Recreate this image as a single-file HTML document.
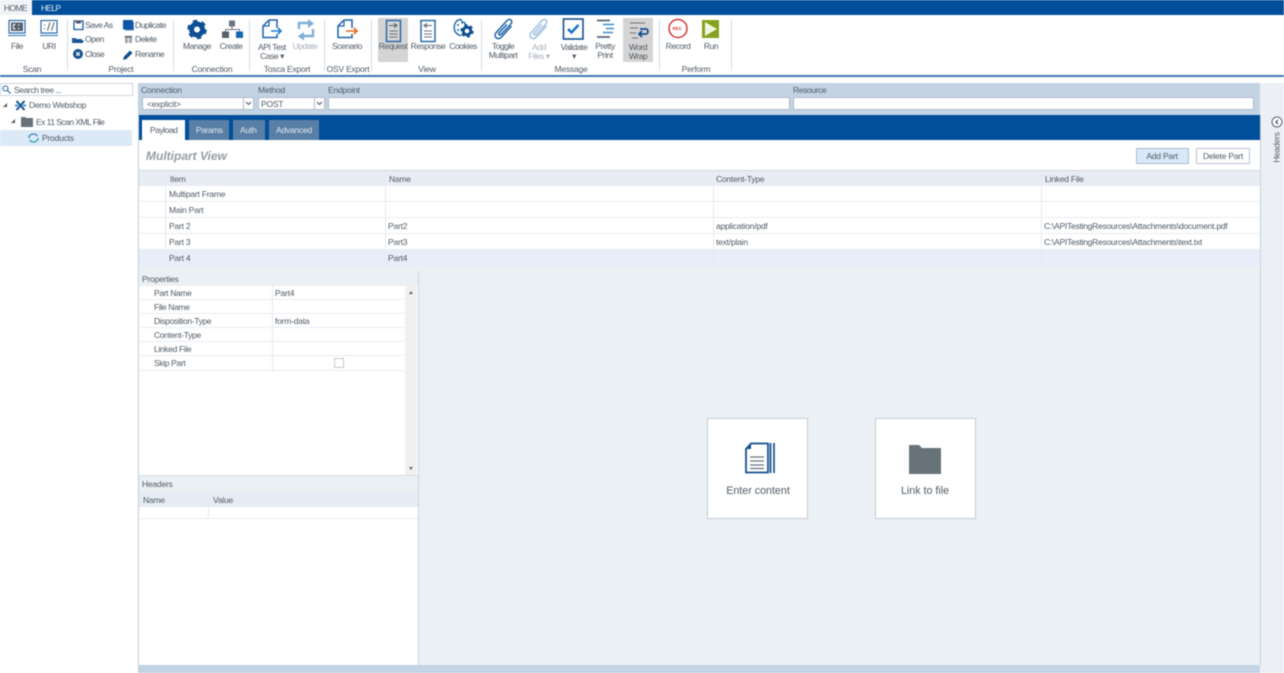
<!DOCTYPE html>
<html><head><meta charset="utf-8"><style>
html,body{margin:0;padding:0;background:#fff}
#p{position:relative;width:1284px;height:673px;overflow:hidden;background:#fff;font-family:"Liberation Sans",sans-serif;font-size:8.5px;letter-spacing:-.22px;color:#505b66;filter:blur(.45px)}
#p div,#p svg{position:absolute}
.t{white-space:nowrap;line-height:11px}
.c{transform:translateX(-50%);text-align:center;line-height:9px;letter-spacing:-.45px}
.g{transform:translateX(-50%);line-height:11px;letter-spacing:-.22px}
.a{letter-spacing:-.5px}
.i{height:13px;background:#fff;border:1px solid #aebccb;box-sizing:border-box}
.v{width:1px;background:#e6ebf0}
.h{height:1px;background:#e9edf2}
.s{width:1px;background:#d5dde6;top:20px;height:51px}
.b{letter-spacing:-.45px}
</style></head><body><div id="p">
<!-- top bar -->
<div style="left:0;top:0;width:1284px;height:15px;background:#014f9b"></div>
<div style="left:0;top:0;width:32px;height:15px;background:#f1f3f6"></div>
<div class="t" style="left:4px;top:3px;color:#55606c;letter-spacing:-.65px">HOME</div>
<div class="t" style="left:41px;top:3px;color:#e3ebf4;letter-spacing:-.7px">HELP</div>
<div style="left:0;top:75px;width:1284px;height:2px;background:#3f78b0"></div>

<!-- ribbon separators -->
<div class="s" style="left:67px"></div><div class="s" style="left:173px"></div><div class="s" style="left:249px"></div><div class="s" style="left:324px"></div><div class="s" style="left:371px"></div><div class="s" style="left:481px"></div><div class="s" style="left:659px"></div><div class="s" style="left:731px"></div>
<div style="left:378px;top:18px;width:30px;height:44px;background:#d4d4d4"></div>
<div style="left:623px;top:18px;width:30px;height:44px;background:#d4d4d4"></div>

<!-- ribbon group labels -->
<div class="t g" style="left:32px;top:64px">Scan</div>
<div class="t g" style="left:121px;top:64px">Project</div>
<div class="t g" style="left:212px;top:64px">Connection</div>
<div class="t g" style="left:287px;top:64px">Tosca Export</div>
<div class="t g" style="left:348px;top:64px">OSV Export</div>
<div class="t g" style="left:427px;top:64px">View</div>
<div class="t g" style="left:571px;top:64px">Message</div>
<div class="t g" style="left:696px;top:64px">Perform</div>

<!-- ribbon labels -->
<div class="t c" style="left:17px;top:42px">File</div>
<div class="t c" style="left:49px;top:42px">URI</div>
<div class="t a" style="left:85px;top:20px">Save As</div>
<div class="t a" style="left:85px;top:34px">Open</div>
<div class="t a" style="left:85px;top:49px">Close</div>
<div class="t a" style="left:135px;top:20px">Duplicate</div>
<div class="t a" style="left:135px;top:34px">Delete</div>
<div class="t a" style="left:135px;top:49px">Rename</div>
<div class="t c" style="left:197px;top:42px">Manage</div>
<div class="t c" style="left:231px;top:42px">Create</div>
<div class="t c" style="left:272px;top:43px">API Test<br>Case ▾</div>
<div class="t c" style="left:305px;top:42px;color:#a8b1ba">Update</div>
<div class="t c" style="left:347px;top:42px">Scenario</div>
<div class="t c" style="left:393px;top:42px">Request</div>
<div class="t c" style="left:428px;top:42px">Response</div>
<div class="t c" style="left:463px;top:42px">Cookies</div>
<div class="t c" style="left:503px;top:42px">Toggle<br>Multipart</div>
<div class="t c" style="left:539px;top:43px;color:#a8b1ba">Add<br>Files ▾</div>
<div class="t c" style="left:574px;top:43px">Validate<br>▾</div>
<div class="t c" style="left:605px;top:42px">Pretty<br>Print</div>
<div class="t c" style="left:638px;top:43px">Word<br>Wrap</div>
<div class="t c" style="left:678px;top:42px">Record</div>
<div class="t c" style="left:711px;top:42px">Run</div>

<!-- ribbon icons -->
<svg style="left:0;top:15px" width="740" height="28" viewBox="0 15 740 28" fill="none">
<!-- File -->
<rect x="9" y="20.500" width="16" height="12.500" stroke="#2a6aa8" stroke-width="1.200"/><path d="M8 35.500h18" stroke="#4d8cc4" stroke-width="1.300"/><rect x="11" y="22.500" width="12" height="8.500" fill="#55606c"/><path d="M15.500 24.500h-2v4.500h2M18 25h1.500M18 28.500h1.500" stroke="#fff" stroke-width="1"/>
<!-- URI -->
<rect x="41" y="20.500" width="16" height="12.500" stroke="#2a6aa8" stroke-width="1.200"/><path d="M40 35.500h18" stroke="#4d8cc4" stroke-width="1.300"/><path d="M44 25h1.200M44 28.500h1.200M47.500 30.500l2.500-8M51.500 30.500l2.500-8" stroke="#55606c" stroke-width="1.100"/>
<!-- Save As -->
<rect x="74" y="21" width="9" height="8.500" fill="#fff" stroke="#1d5fa3" stroke-width="1.300"/><rect x="76" y="20.500" width="5" height="3" fill="#556"/>
<!-- Open -->
<path d="M72 44v-6h3.500l1 1h5.500v1.500h-6.500l-2 3.500z" fill="#1d5fa3"/><path d="M73 44.500l2-4h9l-2 4z" fill="#14508f"/>
<!-- Duplicate -->
<rect x="125" y="22" width="9" height="8.500" fill="#4d8cc4"/><rect x="123" y="20" width="10" height="9.500" fill="#0f56a6"/>
<!-- Delete -->
<path d="M124.500 36.500h8M126 37.500v7.500h5v-7.500z" stroke="#6a7580" stroke-width="1.200"/><path d="M127.500 39v5M129.500 39v5" stroke="#6a7580" stroke-width=".7"/>
<!-- Manage gear -->
<circle cx="197" cy="29.500" r="5.500" stroke="#0e4f94" stroke-width="5"/><circle cx="197" cy="29.500" r="8.300" stroke="#0e4f94" stroke-width="3" stroke-dasharray="4.400 4.290"/>
<!-- Create -->
<rect x="229" y="20.500" width="6" height="6" fill="#6a7580"/><path d="M232 26v3.500M225.500 32v-2.500h14V32" stroke="#6a7580"/><rect x="222" y="31.500" width="7" height="6.500" fill="#55606c"/><rect x="236" y="31.500" width="7" height="6.500" fill="#1565b0"/>
<!-- API test -->
<path d="M269 20h8v8M269 20l-6 6v11.500h14v-3.500" stroke="#1c62a8" stroke-width="1.500"/><path d="M263 26h6v-6" stroke="#1c62a8" stroke-width="1.200"/><path d="M271 31h10M278 28l3 3-3 3" stroke="#1c7fd0" stroke-width="1.600"/>
<!-- Update -->
<path d="M299 29v-6h10" stroke="#7fb0d8" stroke-width="2.400"/><path d="M308 19l6 4.500-6 4.500z" fill="#7fb0d8"/><path d="M313 29v7h-10" stroke="#7fb0d8" stroke-width="2.400"/><path d="M304 32l-6 4-0 .5 6 4z" fill="#7fb0d8"/>
<!-- Scenario -->
<path d="M344 20h8v8M344 20l-6 6v11.500h14v-3.500" stroke="#1c62a8" stroke-width="1.500"/><path d="M338 26h6v-6" stroke="#1c62a8" stroke-width="1.200"/><path d="M346 31h11M354 28l3 3-3 3" stroke="#e0691a" stroke-width="1.600"/>
<!-- Request -->
<rect x="386.500" y="20.500" width="14" height="21" stroke="#2c6aa5" stroke-width="1.500"/><path d="M389 25.500h8M394 23.500l3 2-3 2" stroke="#5b6670" stroke-width="1.100"/><path d="M389.500 31h8M389.500 34h8M389.500 37h8" stroke="#6a7580" stroke-width="1.100"/>
<!-- Response -->
<rect x="421" y="20.500" width="14" height="21" stroke="#2c6aa5" stroke-width="1.500"/><path d="M424 25.500h8M427 23.500l-3 2 3 2" stroke="#5b6670" stroke-width="1.100"/><path d="M424 31h8M424 34h8M424 37h8" stroke="#6a7580" stroke-width="1.100"/>
<!-- Cookies -->
<path d="M461 19.500c-4.500 0-6.800 4-6.800 8 0 4.500 3 7.500 7 8M461 19.500c.5 2 2 3 3.500 3 .3 1.500 1.500 2.500 3 2.500" stroke="#1c62a8" stroke-width="1.400"/><circle cx="458" cy="25" r="1" fill="#1c62a8"/><circle cx="462" cy="23" r=".8" fill="#1c62a8"/><circle cx="458" cy="30" r="1" fill="#1c62a8"/><circle cx="467" cy="31" r="3.800" stroke="#0e4f94" stroke-width="3"/><circle cx="467" cy="31" r="5.800" stroke="#0e4f94" stroke-width="1.800" stroke-dasharray="2.900 3.170"/>
<!-- Toggle Multipart clip -->
<g stroke="#1c62a8" stroke-width="1.500"><path d="M511.500 26l-10 11c-1.800 2-4.200 2-5.500.6s-1.200-3.600.5-5.500l10.500-11.500c1.300-1.400 3-1.500 4-.6s1 2.700-.2 4l-9.500 10.300c-.8.9-1.700.9-2.200.4s-.5-1.300.2-2.100l7.500-8.100"/></g>
<g stroke="#9dc0de" stroke-width="1.500"><path d="M546.500 26l-10 11c-1.800 2-4.200 2-5.500.6s-1.200-3.600.5-5.500l10.500-11.500c1.300-1.400 3-1.500 4-.6s1 2.700-.2 4l-9.500 10.300c-.8.9-1.700.9-2.200.4s-.5-1.300.2-2.100l7.500-8.100"/></g>
<!-- Validate -->
<rect x="563.500" y="19" width="19.500" height="20" fill="#fff" stroke="#14508f" stroke-width="1.600"/><path d="M568 29l3.500 3.500 7-7.500" stroke="#1470c8" stroke-width="2.400"/>
<!-- Pretty print -->
<path d="M597 20.500h13" stroke="#55606c" stroke-width="1.700"/><path d="M603 24.500h11M606 28.500h8M603 32.500h10" stroke="#3d8ccc" stroke-width="1.500"/><path d="M597 37h13" stroke="#55606c" stroke-width="1.700"/>
<!-- Word wrap -->
<path d="M630 23h15M630 28h8M630 33h6M632 38h6" stroke="#6a7580" stroke-width="1.100"/><path d="M640 29h6c2.500 0 2.500 5 0 5h-7M642 31l-3 3 3 3" stroke="#14508f" stroke-width="1.800"/>
<!-- Record -->
<circle cx="678" cy="28.500" r="9" fill="#fff" stroke="#d0393b" stroke-width="1.500"/>
<!-- Run -->
<rect x="702" y="20" width="17" height="18" fill="#87a21e"/><path d="M705 22v14l12-7z" fill="#f2f5df"/>
</svg>
<div class="t" style="left:672.500px;top:24px;font-size:4.500px;letter-spacing:0;font-weight:bold;color:#d0393b;line-height:10px">REC</div>
<svg style="left:72px;top:48px" width="12" height="12" viewBox="0 0 12 12" fill="none"><circle cx="6" cy="6" r="5" fill="#14508f"/><path d="M4.200 4.200l3.600 3.600M7.800 4.200l-3.600 3.600" stroke="#fff" stroke-width="1.200"/></svg>
<svg style="left:123px;top:49px" width="11" height="11" viewBox="0 0 11 11" fill="none"><path d="M0 11l1-3.500 6-6 2.500 2.500-6 6z" fill="#14508f"/></svg>

<!-- Sidebar -->
<div class="i" style="left:0;top:83px;width:133px;border-color:#cfd6de"></div>
<svg style="left:2px;top:85px" width="9" height="9" viewBox="0 0 9 9" fill="none"><circle cx="3.500" cy="3.500" r="2.500" stroke="#2c6aa5" stroke-width="1.100"/><path d="M5.500 5.500l3 3" stroke="#2c6aa5" stroke-width="1.200"/></svg>
<div class="t" style="left:14px;top:85px;letter-spacing:-.4px">Search tree ...</div>
<div style="left:3px;top:103px;border-style:solid;border-width:0 0 4px 4px;border-color:transparent transparent #555 transparent"></div>
<svg style="left:15px;top:100px" width="11" height="11" viewBox="0 0 11 11" fill="none"><path d="M1.500 1l8 9M9.500 1l-8 9" stroke="#14508f" stroke-width="2"/><path d="M0 5.500h3M8 5.500h3" stroke="#2a86d0" stroke-width="1.800"/></svg>
<div class="t" style="left:29px;top:100px;letter-spacing:-.3px">Demo Webshop</div>
<div style="left:11px;top:119px;border-style:solid;border-width:0 0 4px 4px;border-color:transparent transparent #555 transparent"></div>
<svg style="left:21px;top:117px" width="12" height="10" viewBox="0 0 12 10"><path d="M0 0h4l1 1h7v9H0z" fill="#68727b"/></svg>
<div class="t" style="left:36px;top:117px;letter-spacing:-.53px">Ex 11 Scan XML File</div>
<div style="left:0;top:130px;width:132px;height:16px;background:#dce9f6"></div>
<svg style="left:28px;top:133px" width="11" height="10" viewBox="0 0 11 10" fill="none"><path d="M1 5c0-2.500 2-4 4.500-4 1.500 0 2.800.5 3.800 2" stroke="#3f7fba" stroke-width="1.300"/><path d="M10 5c0 2.500-2 4-4.500 4-1.500 0-2.800-.5-3.800-2" stroke="#1fa3b0" stroke-width="1.300"/></svg>
<div class="t" style="left:42px;top:133px">Products</div>

<!-- left/main divider -->
<div style="left:138px;top:83px;width:1px;height:590px;background:#c4ced9"></div>

<!-- Connection bar -->
<div style="left:139px;top:83px;width:1121px;height:32px;background:#c4d3e4"></div>
<div class="t" style="left:141px;top:85px">Connection</div>
<div class="t" style="left:258px;top:85px">Method</div>
<div class="t" style="left:328px;top:85px">Endpoint</div>
<div class="t" style="left:793px;top:85px;letter-spacing:-.4px">Resource</div>
<div class="i" style="left:142px;top:97px;width:112px"></div>
<div style="left:243px;top:98px;width:1px;height:11px;background:#aebccb"></div>
<div class="t" style="left:147px;top:99px">&lt;explicit&gt;</div>
<div class="i" style="left:258px;top:97px;width:67px"></div>
<div style="left:314px;top:98px;width:1px;height:11px;background:#aebccb"></div>
<div class="t" style="left:261px;top:99px">POST</div>
<svg style="left:245px;top:101px" width="7" height="5" viewBox="0 0 7 5" fill="none"><path d="M1 1l2.500 2.500L6 1" stroke="#556" stroke-width="1.100"/></svg>
<svg style="left:316px;top:101px" width="7" height="5" viewBox="0 0 7 5" fill="none"><path d="M1 1l2.500 2.500L6 1" stroke="#556" stroke-width="1.100"/></svg>
<div class="i" style="left:328px;top:97px;width:462px"></div>
<div class="i" style="left:793px;top:97px;width:461px"></div>

<!-- Blue band -->
<div style="left:139px;top:115px;width:1121px;height:25px;background:#014f9b"></div>
<div style="left:142px;top:120px;width:43px;height:20px;background:#fff"></div>
<div class="t b" style="left:150px;top:125px">Payload</div>
<div style="left:189px;top:120px;width:40px;height:20px;background:#5a7fa6"></div>
<div class="t b" style="left:196px;top:125px;color:#dfe7f0">Params</div>
<div style="left:233px;top:120px;width:32px;height:20px;background:#5a7fa6"></div>
<div class="t" style="left:240px;top:125px;color:#dfe7f0">Auth</div>
<div style="left:269px;top:120px;width:50px;height:20px;background:#5a7fa6"></div>
<div class="t" style="left:276px;top:125px;color:#dfe7f0">Advanced</div>

<!-- Multipart View header -->
<div class="t" style="left:146px;top:149px;font-size:12px;letter-spacing:0;font-weight:bold;font-style:italic;color:#959da5;line-height:14px">Multipart View</div>
<div style="left:1136px;top:148px;width:53px;height:16px;background:#d9e8f7;border:1px solid #a9bdd2;box-sizing:border-box"></div>
<div class="t g" style="left:1162px;top:151px">Add Part</div>
<div style="left:1196px;top:148px;width:54px;height:16px;background:#fff;border:1px solid #b8c4d1;box-sizing:border-box"></div>
<div class="t g" style="left:1223px;top:151px">Delete Part</div>

<!-- Table -->
<div style="left:139px;top:170px;width:1121px;height:16px;background:#e8edf4;border-top:1px solid #cfd7e0;box-sizing:border-box"></div>
<div style="left:139px;top:250px;width:1121px;height:16px;background:#e8edf9"></div>
<div class="h" style="left:139px;top:201px;width:1121px"></div>
<div class="h" style="left:139px;top:217px;width:1121px"></div>
<div class="h" style="left:139px;top:233px;width:1121px"></div>
<div class="h" style="left:139px;top:249px;width:1121px"></div>
<div class="v" style="left:165px;top:171px;height:95px"></div>
<div class="v" style="left:385px;top:171px;height:95px"></div>
<div class="v" style="left:713px;top:171px;height:95px"></div>
<div class="v" style="left:1041px;top:171px;height:95px"></div>
<div class="t" style="left:170px;top:174px">Item</div>
<div class="t" style="left:389px;top:174px">Name</div>
<div class="t" style="left:716px;top:174px">Content-Type</div>
<div class="t" style="left:1045px;top:174px">Linked File</div>
<div class="t" style="left:169px;top:189px">Multipart Frame</div>
<div class="t" style="left:169px;top:205px">Main Part</div>
<div class="t" style="left:169px;top:221px">Part 2</div>
<div class="t" style="left:388px;top:221px">Part2</div>
<div class="t" style="left:716px;top:221px">application/pdf</div>
<div class="t" style="left:1044px;top:221px;letter-spacing:-.26px">C:\APITestingResources\Attachments\document.pdf</div>
<div class="t" style="left:169px;top:237px">Part 3</div>
<div class="t" style="left:388px;top:237px">Part3</div>
<div class="t" style="left:716px;top:237px">text/plain</div>
<div class="t" style="left:1044px;top:237px;letter-spacing:-.26px">C:\APITestingResources\Attachments\text.txt</div>
<div class="t" style="left:169px;top:253px">Part 4</div>
<div class="t" style="left:388px;top:253px">Part4</div>

<!-- Lower area -->
<div style="left:139px;top:266px;width:1121px;height:399px;background:#ebf0f4"></div>
<div style="left:139px;top:286px;width:279px;height:379px;background:#fff"></div>
<div style="left:418px;top:271px;width:1px;height:394px;background:#ccd5de"></div>
<div class="t" style="left:142px;top:274px">Properties</div>
<div style="left:405px;top:286px;width:12px;height:189px;background:#f0f0f0"></div>
<div style="left:409px;top:291px;border-style:solid;border-width:0 2.500px 3px;border-color:transparent transparent #666"></div>
<div style="left:409px;top:467px;border-style:solid;border-width:3px 2.500px 0;border-color:#666 transparent transparent"></div>
<div class="h" style="left:140px;top:299px;width:265px"></div>
<div class="h" style="left:140px;top:313px;width:265px"></div>
<div class="h" style="left:140px;top:327px;width:265px"></div>
<div class="h" style="left:140px;top:341px;width:265px"></div>
<div class="h" style="left:140px;top:355px;width:265px"></div>
<div class="h" style="left:140px;top:370px;width:265px"></div>
<div class="v" style="left:272px;top:286px;height:85px"></div>
<div class="t" style="left:154px;top:288px;letter-spacing:-.35px">Part Name</div><div class="t" style="left:275px;top:288px">Part4</div>
<div class="t" style="left:154px;top:302px;letter-spacing:-.35px">File Name</div>
<div class="t" style="left:154px;top:316px;letter-spacing:-.35px">Disposition-Type</div><div class="t" style="left:275px;top:316px">form-data</div>
<div class="t" style="left:154px;top:330px;letter-spacing:-.35px">Content-Type</div>
<div class="t" style="left:154px;top:344px;letter-spacing:-.35px">Linked File</div>
<div class="t" style="left:154px;top:358px;letter-spacing:-.35px">Skip Part</div>
<div style="left:334px;top:358px;width:10px;height:10px;background:#fff;border:1px solid #c4cad0;box-sizing:border-box"></div>

<div style="left:139px;top:475px;width:279px;height:16px;background:#ebf0f4;border-top:1px solid #d5dce3;box-sizing:border-box"></div>
<div class="t" style="left:142px;top:479px">Headers</div>
<div style="left:139px;top:491px;width:279px;height:16px;background:#e6ecf3"></div>
<div class="t" style="left:143px;top:495px">Name</div>
<div class="t" style="left:213px;top:495px">Value</div>
<div class="v" style="left:208px;top:491px;height:27px"></div>
<div class="h" style="left:139px;top:518px;width:279px"></div>

<!-- Cards -->
<div style="left:707px;top:418px;width:101px;height:101px;background:#fff;border:1px solid #c2ccd6;box-sizing:border-box"></div>
<div style="left:875px;top:418px;width:101px;height:101px;background:#fff;border:1px solid #c2ccd6;box-sizing:border-box"></div>
<svg style="left:744px;top:442px" width="32" height="32" viewBox="0 0 32 32" fill="none">
<path d="M7 1.500h17v29H2V7z" fill="#fff" stroke="#14508f" stroke-width="1.800"/><path d="M2 7h5V1.500z" fill="#14508f"/><path d="M6 15h14M6 19h14M6 23h14M6 26.500h14" stroke="#6a7580" stroke-width="1.300"/><path d="M26.500 1v30M30 1v30" stroke="#14508f" stroke-width="1.700"/></svg>
<div class="t c" style="left:758px;top:485px;font-size:10.700px;letter-spacing:0;line-height:13px">Enter content</div>
<svg style="left:908px;top:444px" width="34" height="31" viewBox="0 0 34 31"><path d="M1 1h10l3 3h19v26H1z" fill="#687279"/></svg>
<div class="t c" style="left:925px;top:485px;font-size:10.700px;letter-spacing:0;line-height:13px">Link to file</div>

<!-- Bottom bar -->
<div style="left:139px;top:665px;width:1121px;height:8px;background:#c4d3e4"></div>

<!-- Right rail -->
<div style="left:1260px;top:83px;width:24px;height:590px;background:#ecf0f4"></div>
<div style="left:1260px;top:115px;width:1px;height:550px;background:#c7d1db"></div>
<svg style="left:1271px;top:116px" width="12" height="12" viewBox="0 0 12 12" fill="none"><circle cx="6" cy="6" r="5" fill="#fff" stroke="#5a6570"/><path d="M7 4L5 6l2 2" stroke="#3a4550" stroke-width="1.200"/></svg>
<div class="t" style="left:1257px;top:142px;width:40px;text-align:center;transform:rotate(-90deg)">Headers</div>
</div></body></html>
